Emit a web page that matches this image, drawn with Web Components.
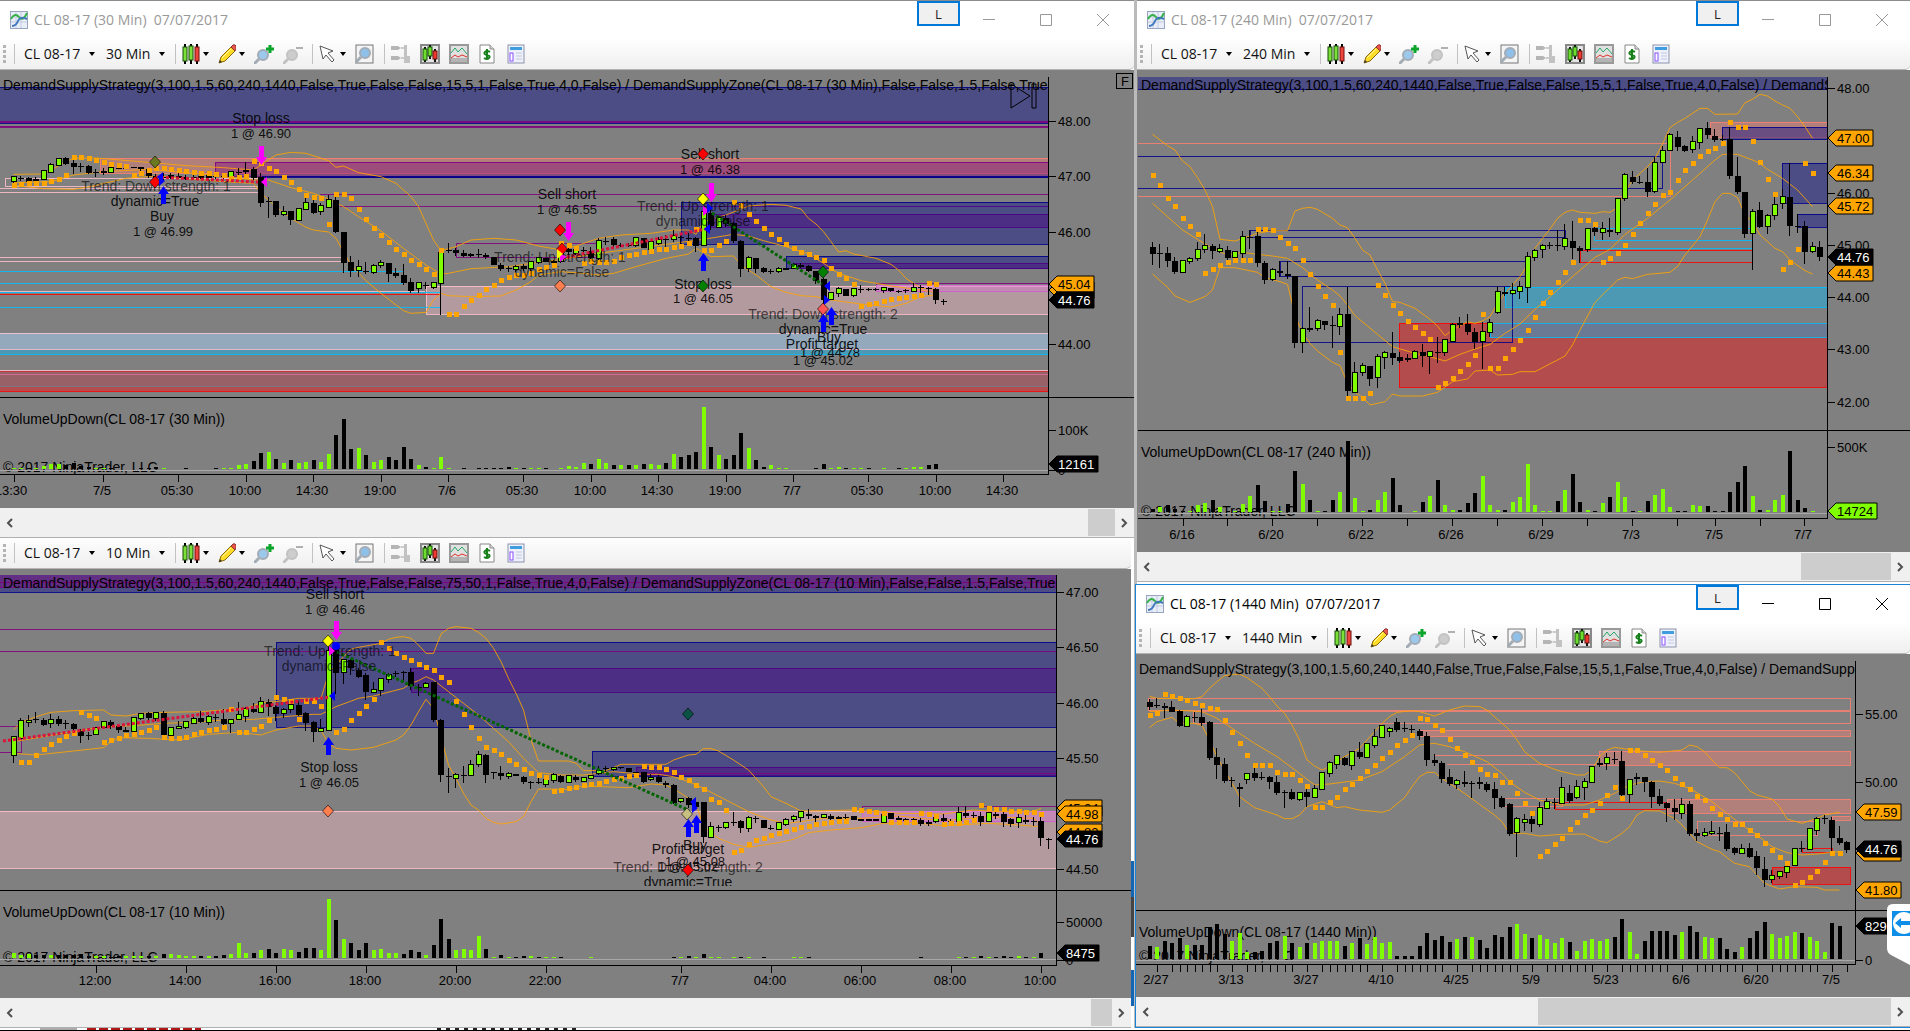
<!DOCTYPE html>
<html lang="en">
<head>
<meta charset="utf-8">
<title>CL 08-17 charts</title>
<style>
  body {
    margin: 0;
    background: #fff;
    font-family: "Open Sans", "Noto Sans", sans-serif;
  }
</style>
</head>
<body>
<trade-desk>
  <chart-window slot="left" class="plain" heading="CL 08-17 (30 Min)  07/07/2017">
    <tool-bar slot="tools" instrument="CL 08-17" interval="30 Min"></tool-bar>
    <price-chart feed="min30"></price-chart>
    <scroll-strip style="--thumb: 27px"></scroll-strip>
  </chart-window>
  <chart-window slot="left" class="bare">
    <tool-bar slot="tools" instrument="CL 08-17" interval="10 Min"></tool-bar>
    <price-chart feed="min10"></price-chart>
    <scroll-strip style="--thumb: 21px"></scroll-strip>
  </chart-window>
  <chart-window slot="right" class="plain" heading="CL 08-17 (240 Min)  07/07/2017">
    <tool-bar slot="tools" instrument="CL 08-17" interval="240 Min"></tool-bar>
    <price-chart feed="min240"></price-chart>
    <scroll-strip style="--thumb: 90px"></scroll-strip>
  </chart-window>
  <chart-window slot="right" class="active" heading="CL 08-17 (1440 Min)  07/07/2017">
    <tool-bar slot="tools" instrument="CL 08-17" interval="1440 Min"></tool-bar>
    <price-chart feed="min1440"></price-chart>
    <scroll-strip style="--thumb: 353px"></scroll-strip>
  </chart-window>
</trade-desk>

<script>
// All y values in the feeds are counted in thirds of a pixel from `base`.
// bars:  direction, body top, body bottom, high, low (wick may be left out)
// sar:   one value per bar, "." for none
// vol:   direction + height, "." for none
// bands: [bar, y] knots
// zones: x1, x2, y1, y2, colour, fill (1) or outline only (0)
const HEAD = 'DemandSupplyStrategy(3,100,1.5,60,240,1440,False,True,False,False,';

const feeds = {
  min30: {
    view: [0, 70, 1134, 438], plotTop: 77, right: 1048, base: 0, first: 13.5, split: 397, axis: 474, zero: 469,
    title: HEAD + '15,5,1,False,True,4,0,False) / DemandSupplyZone(CL 08-17 (30 Min),False,False,1.5,False,True',
    titleAt: [3, 85], volTitle: 'VolumeUpDown(CL 08-17 (30 Min))', volAt: [3, 419], copyAt: [3, 467],
    bars: `g532 543 528 548,b535 538 528 544,b534 545 530 552,b537 543 530 548,g514 537 510 540,g495 517 490 520,g477 495 473 498,b475 491 471 494,
      b489 500 480 521,b497 502 488 515,b499 518 495 521,b516 519 508 530,b514 518 505 524,g504 516 500 520,b503 506 496 508,b503 506 500 508,
      b502 505,b502 508 500 522,b508 529 503 533,b527 533 522 540,b530 534 520 540,b526 534 520 538,b528 535 520 538,b531 536 525 540,
      b531 535 525 540,b528 534 522 538,b526 533 520 540,b528 532 522 537,b528 531 520 538,g515 528 512 530,b516 518 503 530,b511 516 485 528,
      b506 533 500 540,b530 608 520 622,b603 607 590 655,b604 644 603 650,g636 643 617 648,b634 661 634 675,g626 660,g610 626 594 630,
      b608 638 590 642,g617 634 610 645,g600 620 585 625,b600 697 592 700,b697 788 697 818,b786 813 767 830,g802 811 780 830,b812 816 785 822,
      g797 816 793 822,g790 795 779 803,b790 822 788 845,b819 829 803 833,b826 850 793 856,b846 872 835 878,g849 864 845 880,b854 858 846 867,
      g849 860 845 867,g760 850 755 945,b751 754 728 758,b751 758 745 768,b760 767 750 772,b762 767 758 772,b762 766 748 775,b765 771 760 776,
      b771 796,b794 806 790 812,b804 807 798 815,g800 806 795 815,b797 806 793 812,g787 804 782 815,g775 787 770 792,b773 787,
      b783 788 780 795,g762 783 755 790,b748 757 735 765,g750 758 745 765,b750 753 740 765,b752 775 740 780,g722 775 715 782,b722 724 710 735,
      b717 735 712 745,b734 736 728 740,b735 738 728 742,g715 735 712 740,b713 745,g727 746 722 750,g720 730 712 735,b718 720 705 742,
      g708 718 690 725,b711 714 700 735,b713 716 700 735,b713 738 710 755,g635 736 620 738,b640 678 625 690,g655 682 650 685,b655 672 645 680,
      b670 722 665 728,b722 806 720 832,g774 803 768 815,b775 808 773 818,b805 815 800 820,b812 816 808 823,g807 814 800 820,b805 809,
      g795 803 790 806,b795 800 790 804,b798 812 796 816,b814 842 812 852,b838 900 835 922,g880 896 878 900,g868 878 862 890,b866 887,
      g868 886 863 890,b867 869 855 880,b868 870 865 873,b868 870 865 873,g865 871 863 878,b865 872 863 876,b873 876 870 880,b870 873 866 880,
      g865 873 850 876,b862 864 855 880,b865 868 860 885,b867 899 865 912,b902 906 898 915`,
    sar: `556 551 550 548 548 544 537 526 472 472 475 481 487 492 495 498 526 518 510 503 505 507 509 512 515 518 520 523 524 534 532 528
      484 490 503 514 532 547 566 584 592 594 672 581 581 593 626 656 683 705 727 747 762 781 793 806 822 750 942 942 919 900 884 867
      855 841 830 825 825 818 806 800 795 728 735 745 790 783 785 785 784 772 766 761 757 752 748 746 741 737 728 687 750 750 736 724
      605 616 641 664 683 702 716 731 744 755 763 770 780 803 822 835 852 918 912 909 902 898 895 891 887 884 848 852`,
    vol: `g3 g3 b3 g4 g8 g15 g15 b12 b18 b8 b6 g3 g3 b3 . . . b3 b3 b6 g3 . . b3 . . . b3 g3 g3 g11 g14
      b23 b49 g52 b29 g18 b26 g18 g22 b26 g22 g45 b101 b150 b60 g63 b41 g22 g26 b37 b26 b67 b29 g11 b7 g3 g37 g3 . b3 . b3 b3
      b3 b3 b7 g3 b3 g3 g3 b3 . g3 g10 g7 g18 b14 g29 g18 b11 g11 b11 g11 b14 g14 g11 b18 g44 b37 b41 b52 g187 b67 g41 b29
      b41 b108 g63 b26 b7 g11 g3 g3 . . . b3 b14 g3 g7 b3 g3 g3 b3 . g3 . b3 g3 g7 g7 b11 b14`,
    bands: [
      [[0,523],[4,522],[7,485],[8,475],[11,474],[18,487],[23,497],[28,503],[32,510],[34,480],[35,465],[37,457],[39,460],[42,482],[43,502],[44,498],[46,518],[49,530],[51,550],[53,590],[54,620],[55,670],[56,720],[57,752],[59,740],[61,720],[64,715],[67,720],[70,738],[73,750],[75,738],[78,715],[81,705],[85,700],[88,690],[90,690],[91,703],[92,665],[95,645],[98,618],[101,613],[103,616],[105,627],[106,655],[107,672],[108,695],[109,725],[110,756],[111,752],[112,762],[115,775],[117,793],[118,810],[119,835],[121,865],[123,868]],
      [[0,548],[5,545],[8,525],[12,515],[18,508],[25,522],[32,540],[34,540],[37,563],[40,580],[42,597],[44,620],[46,650],[49,693],[52,745],[55,795],[57,822],[58,820],[61,806],[66,800],[70,787],[73,778],[78,760],[83,745],[88,730],[92,718],[96,703],[98,708],[100,722],[103,740],[106,762],[108,790],[110,820],[113,842],[117,858],[121,870],[123,878]],
      [[0,556],[4,566],[8,568],[10,561],[15,535],[19,528],[28,545],[32,550],[33,580],[35,620],[37,655],[39,682],[40,690],[42,696],[43,715],[44,755],[45,795],[47,842],[49,880],[51,915],[52,932],[53,940],[55,937],[56,900],[57,880],[58,887],[61,890],[65,888],[67,870],[69,845],[70,825],[73,815],[76,820],[78,825],[80,820],[83,800],[87,775],[90,762],[91,745],[93,770],[96,768],[97,795],[99,825],[101,860],[103,877],[105,887],[107,890],[109,900],[113,912],[117,921],[119,910],[121,890],[123,885]]
    ],
    zones: [
      [-2,1050,262,370,'darkblue',1], [-2,1050,363,367,'purple',1], [-2,1050,378,381,'purple',1],
      [100,1050,475,520,'salmon',1], [215,1050,487,529,'purple',1], [320,1050,531,531,'darkblue',0], [262,1050,529,532,'darkblue',0],
      [5,262,535,558,'pink',0], [-2,260,565,577,'pink',0],
      [320,1050,583,583,'purple',0], [340,1050,618,618,'purple',0],
      [681,1050,606,733,'darkblue',1], [711,1050,643,682,'indigo',1],
      [786,1050,768,805,'darkblue',1], [793,1050,790,805,'indigo',1],
      [426,1050,857,943,'pink',1], [876,1050,850,873,'purple',0], [876,1050,856,873,'orchid',1],
      [456,597,730,771,'purple',0],
      [-2,342,771,783,'pink',0], [-2,403,813,813,'deepskyblue',0], [-2,403,850,850,'deepskyblue',0], [-2,425,873,873,'pink',0],
      [-2,441,877,877,'deepskyblue',0], [-2,441,881,881,'red',0], [-2,441,921,921,'deepskyblue',0],
      [-2,1050,1000,1061,'deepskyblue',1], [-2,1050,1000,1046,'pink',1],
      [-2,1050,1112,1173,'red',1], [-2,1050,1109,1157,'slategray',1], [-2,1050,1109,1109,'pink',0], [-2,1050,1123,1123,'palevioletred',0]
    ],
    ticks: [[13.5,'13:30',11],[103,'7/5'],[178,'05:30'],[246,'10:00'],[313,'14:30'],[381,'19:00'],[448,'7/6'],[523,'05:30'],[591,'10:00'],[658,'14:30'],[726,'19:00'],[793,'7/7'],[868,'05:30'],[936,'10:00'],[1003,'14:30']],
    labelY: 491,
    scale: [[121,'48.00'],[176,'47.00'],[232,'46.00'],[344,'44.00'],[430,'100K'],[470,'0']],
    tags: [[290,'','orange'],[284,'45.04','orange'],[300,'44.76','black'],[464,'12161','black']],
    dots: [[156,177,258,182,'crimson'],[562,258,706,229,'crimson'],[712,213,822,284,'darkgreen']],
    marks: [['down',261,146,'magenta'],['lt',264,182,'magenta'],['dia',155,162,'#6b7a20'],['dia',155,182,'red'],['lt',160,177,'blue'],['rt',162,181,'blue'],['up',163,186,'blue'],
      ['dia',560,230,'red'],['down',568,222,'magenta'],['dia',560,286,'coral'],['rt',563,257,'magenta'],['dia',562,249,'red'],['rt',560,254,'yellow'],
      ['dia',703,154,'red'],['down',711,183,'magenta'],['dia',703,199,'yellow'],['rt',706,211,'magenta'],['lt',707,229,'blue'],['rt',710,208,'blue'],['up',703,253,'blue'],['dia',703,286,'green'],
      ['dia',823,272,'green'],['lt',827,286,'blue'],['rt',827,300,'blue'],['dia',823,309,'#ff5555'],['up',823,314,'blue'],['up',831,307,'blue']],
    notes: [[261,118,'Stop loss'],[261,133,'1 @ 46.90'],[156,186,'Trend: Down strength: 1',1],[155,201,'dynamic=True'],[162,216,'Buy'],[163,231,'1 @ 46.99'],
      [567,194,'Sell short'],[567,209,'1 @ 46.55'],[560,257,'Trend: Up strength: 1',1],[562,272,'dynamic=False',1],
      [710,154,'Sell short'],[710,169,'1 @ 46.38'],[703,206,'Trend: Up strength: 1',1],[703,221,'dynamic=False',1],[703,284,'Stop loss'],[703,298,'1 @ 46.05'],
      [823,314,'Trend: Down strength: 2',1],[823,329,'dynamic=True'],[829,337,'Buy'],[822,344,'Profit target'],[830,352,'1 @ 44.78'],[823,360,'1 @ 45.02']],
    extra: `<path d="M1011 84V108L1030 96Z M1032 84h4v24h-4z" fill="none" stroke="#000"/>
      <rect x="1116.5" y="73.5" width="16" height="15" fill="none" stroke="#000"/><text x="1121" y="86">F</text>`
  },

  min10: {
    view: [0, 569, 1131, 429], plotTop: 575, right: 1056, base: 560, first: 13.5, split: 890, axis: 965, zero: 958,
    title: HEAD + '75,50,1,False,True,4,0,False) / DemandSupplyZone(CL 08-17 (10 Min),False,False,1.5,False,True',
    titleAt: [3, 583], volTitle: 'VolumeUpDown(CL 08-17 (10 Min))', volAt: [3, 912], copyAt: [3, 957],
    bars: `g532 585 528 608,g483 533 475 537,g482 486 465 500,b478 480 457 490,b480 495 475 497,g480 490 463 503,b478 492 468 497,b490 492 480 507,
      b493 508 490 512,b512 527 508 550,b524 527 515 540,g505 521 500 523,g486 501 482 503,b487 497 480 507,b498 511 497 518,b511 515 500 517,
      g475 513 471 517,g462 474 458 480,b460 475 455 482,g460 475 457 483,b460 525 452 537,g503 524 500 530,g500 503 482 507,g487 501 483 507,
      g476 489 468 493,b473 487 452 490,g472 486 465 495,b470 475 463 487,b476 492 448 497,g480 490 476 518,g465 477 425 481,g447 468 440 487,
      b446 455 430 459,g427 455 410 458,b427 440 418 467,b440 461 435 483,g450 460 445 475,g435 446 427 460,b435 465 422 468,b460 488 457 513,
      b487 515 483 545,g507 513 478 517,g273 510 255 512,b268 338 262 403,g300 337 297 372,b300 325 298 345,b330 350 325 355,b345 395 340 420,
      g390 397 365 400,g357 390 353 408,g345 356 338 370,b338 341 333 350,b335 338 333 367,b337 378 325 390,b380 385 372 408,g371 382 367 385,
      b367 480 365 487,b480 645 478 665,b648 652 625 698,g645 653 640 683,b645 648 617 668,g615 645 600 648,g585 613 573 620,b585 646 583 668,
      b637 640 637 657,b640 648 617 660,g641 648 635 657,b642 648,b650 665 647 672,b667 670 662 687,b667 670 650 672,g660 673 655 680,
      g645 661 638 668,b647 667 645 670,g648 667 645 670,b650 660 645 667,g653 662 650 667,g648 654 645 658,g632 640 618 645,b625 628 618 635,
      g623 627 620 633,b622 625 620 628,b625 637,b637 640,b637 665 635 670,g653 657 643 662,b650 665 645 668,b668 675 663 683,
      b675 728 672 733,g718 724 713 728,b713 735 710 745,b725 740 718 745,b727 832 725 850,g802 832 785 833,b801 805 795 815,g790 800 785 808,
      b785 788 755 797,b783 803 780 818,g775 803 768 815,b773 777 768 790,b780 803,b804 808 795 810,g790 806 787 810,g779 793 775 797,
      g770 778 765 785,g757 771 753 785,b763 768 748 778,b768 773 765 785,g766 770 763 773,b769 777 763 783,b772 777 767 783,b770 773 763 783,
      b768 780,b778 783,b778 782,b778 783,g765 787,b760 778,b775 780 768 788,b778 782 774 786,
      b777 780 774 784,b780 792 775 797,b787 792 780 797,g774 783 768 790,b775 783 763 795,b782 785 778 788,g760 783 740 787,b760 768 737 773,
      b765 768 755 778,b767 785 757 798,g760 783 757 785,b762 767 750 777,b762 785 745 800,b778 793 775 800,g775 787 755 805,b780 787 757 793,
      b783 787 770 797,b783 833 770 857,b836 840 835 867`,
    sar: `. 605 605 586 567 552 541 527 520 456 466 474 545 541 533 525 522 517 511 502 530 534 533 530 523 515 511 507 500 448 515 515
      506 497 481 410 417 422 478 422 422 437 . 515 508 481 459 437 418 245 265 279 290 301 312 320 331 351 366 422 463 500 534 560
      571 582 601 612 627 639 646 650 694 691 685 680 676 672 668 662 658 653 648 645 617 622 622 628 635 650 661 676 688 717 725 751
      875 869 853 841 834 826 819 812 806 801 797 792 788 785 783 782 748 751 754 756 760 787 787 785 785 758 763 767 793 790 788 786
      781 736 743 747 748 752 753 755 755 762`,
    vol: `g14 g10 g12 b10 b10 g8 b8 b10 b8 b12 b6 g6 g6 b4 b6 g6 g6 g5 b5 g6 b12 g12 g9 g5 g5 b5 g5 b5 b8 g12 g45 g15
      b16 g23 b27 b16 g27 g23 b19 b31 b31 g24 g178 b115 g57 b45 b23 b45 g23 g27 g16 g15 b12 b23 b19 g8 b38 b117 b57 g24 g27 g23 g65 b27
      g4 b8 g2 b2 b5 g5 b2 g2 g2 b2 . . . g2 . . . . . . . . . . b2 g2 b5 g3 b12 g3 g3 .
      g3 b2 g3 . b2 . . . g3 g3 b2 . . . . . . . . . . . . . . b2 . . . . g2 b2 g3 b5 g2 b2 b5 b2 g5 b2 g2 b16`,
    bands: [
      [[0,510],[1,487],[3,470],[5,457],[8,452],[12,450],[13,465],[15,468],[17,460],[20,457],[25,455],[28,450],[31,445],[33,428],[35,425],[38,415],[41,415],[42,340],[44,290],[45,268],[46,262],[49,250],[50,238],[51,232],[52,230],[53,235],[54,255],[55,280],[56,280],[57,222],[58,205],[59,200],[61,205],[62,217],[63,235],[64,265],[65,305],[66,355],[67,400],[68,450],[69,540],[70,603],[74,603],[75,610],[76,632],[79,632],[81,613],[87,613],[88,600],[90,585],[91,583],[92,566],[93,566],[94,573],[96,600],[98,630],[100,680],[101,710],[103,730],[105,753],[108,752],[112,750],[118,760],[124,762],[128,750],[131,755],[136,755],[137,745]],
      [[0,545],[4,530],[8,515],[12,500],[16,497],[20,490],[24,487],[28,480],[32,478],[36,470],[40,463],[41,463],[43,440],[46,415],[48,408],[52,385],[53,370],[54,362],[55,350],[56,360],[58,395],[60,430],[62,465],[64,505],[66,545],[68,595],[70,638],[73,645],[76,645],[80,635],[84,643],[86,643],[88,650],[90,665],[92,685],[95,720],[98,755],[101,780],[103,790],[105,785],[108,775],[113,775],[118,768],[124,782],[130,770],[136,775],[137,795]],
      [[0,580],[3,585],[8,573],[12,563],[13,545],[14,533],[18,535],[22,540],[26,523],[30,517],[33,525],[35,510],[38,498],[40,498],[41,512],[42,550],[43,565],[45,570],[48,562],[51,540],[52,525],[53,495],[54,455],[55,418],[56,445],[57,530],[58,615],[59,655],[60,700],[61,735],[62,750],[63,775],[64,787],[65,792],[67,785],[68,770],[69,725],[70,687],[74,688],[76,678],[82,683],[85,672],[87,675],[89,700],[91,730],[92,800],[94,835],[96,853],[98,862],[100,855],[102,848],[104,838],[106,818],[109,810],[113,803],[116,790],[120,788],[124,797],[130,790],[134,795],[137,800]]
    ],
    zones: [
      [-2,1060,30,97,'darkblue',1], [-2,1060,30,81,'purple',1], [-2,1060,65,65,'purple',0],
      [-2,1060,206,206,'purple',0], [276,1060,247,502,'darkblue',1], [-2,1060,273,273,'purple',0], [411,1060,325,397,'indigo',1],
      [592,1060,573,649,'darkblue',1], [636,1060,620,645,'indigo',1], [636,1060,640,640,'purple',0],
      [-2,21,498,577,'purple',0], [-2,1060,753,923,'pink',1], [862,1060,738,783,'purple',0], [862,1060,753,783,'orchid',1]
    ],
    ticks: [[96,'12:00'],[186,'14:00'],[276,'16:00'],[366,'18:00'],[456,'20:00'],[546,'22:00'],[681,'7/7'],[771,'04:00'],[861,'06:00'],[951,'08:00'],[1041,'10:00']],
    labelY: 981,
    scale: [[592,'47.00'],[647,'46.50'],[703,'46.00'],[758,'45.50'],[869,'44.50'],[922,'50000'],[960,'0']],
    tags: [[808,'45.04','orange'],[832,'44.83','orange'],[814,'44.98','orange'],[839,'44.76','black'],[953,'8475','black']],
    dots: [[3,741,330,697,'crimson'],[337,652,688,810,'darkgreen']],
    marks: [['down',336,621,'magenta'],['dia',328,641,'yellow'],['dot',336,646,'blue'],['rt',332,651,'magenta'],['lt',332,696,'blue'],['up',328,737,'blue'],['dia',328,811,'coral'],
      ['dia',688,714,'#0b5345'],['dia',687,814,'#c8c080'],['lt',693,802,'blue'],['rt',695,808,'blue'],['up',688,819,'blue'],['up',696,815,'blue'],['dia',688,870,'red']],
    notes: [[335,594,'Sell short'],[335,609,'1 @ 46.46'],[330,651,'Trend: Up strength: 1',1],[329,666,'dynamic=False',1],[329,767,'Stop loss'],[329,782,'1 @ 46.05'],
      [695,845,'Buy'],[688,849,'Profit target'],[695,861,'1 @ 45.08'],[688,866,'1 @ 45.02'],[688,867,'Trend: Down strength: 2',1],[688,882,'dynamic=True']]
  },

  min240: {
    view: [1137, 70, 773, 482], plotTop: 77, left: 1138, right: 1827, base: 0, first: 1152.5, split: 430, axis: 518, zero: 512,
    title: HEAD + '15,5,1,False,True,4,0,False) / DemandS',
    titleAt: [1141, 85], volTitle: 'VolumeUpDown(CL 08-17 (240 Min))', volAt: [1141, 452], copyAt: [1141, 511],
    bars: `b740 762 725 795,b759 761 733 803,b760 783 740 800,b782 817 770 822,g783 816 780 818,g777 782 770 792,g750 775 725 783,g738 748 703 760,
      b738 752 733 777,g747 753 733 760,b750 773 737 783,g757 770 753 773,g712 760 692 783,b710 712 690 747,b708 788 690 802,b790 840 783 852,
      g809 838 803 842,b812 820 783 830,b822 827 783 838,b828 1028 828 1043,g986 1025 980 1058,b985 989 920 997,g963 985 958 992,b963 976 962 990,
      b974 977 948 1043,g945 977 925 1005,b943 1173 860 1197,g1120 1177 1087 1180,g1098 1116 1090 1127,b1098 1136 1097 1158,g1072 1132 1063 1163,g1060 1072 1052 1107,
      b1060 1073 995 1095,b1070 1083 1057 1090,b1075 1079 1063 1085,g1057 1075 1050 1077,b1057 1069 1032 1100,g1057 1068 1052 1122,b1055 1058 1010 1088,g1020 1056 1018 1068,
      g975 1023 970 1027,b970 975 950 983,b973 997 943 1005,b997 1025 985 1047,g997 1023 967 1107,g970 997 957 1012,g877 937 858 943,b877 881 860 888,
      g873 880 850 885,g862 873 843 897,g772 861 757 908,g752 770 748 783,g738 748 733 773,b735 738 725 748,b735 738 690 753,g718 738 672 750,
      b722 745 662 777,b745 752 737 788,g688 748 683 755,b685 697 680 707,g688 696 665 720,b690 697 653 712,g598 697 593 705,g524 595 518 602,
      b530 547 513 552,b545 548 527 552,b547 577 503 590,g490 574 470 578,g453 486 437 490,g406 450 400 453,b410 440 393 453,b437 452 435 455,
      g427 448 407 458,g388 427 383 447,b383 405 365 417,b407 420 388 427,b417 420 405 430,b418 527 380 537,b528 577 470 583,b577 702 575 713,
      g637 700 627 810,b630 680 607 683,g648 677 643 702,g615 645 583 660,g592 608 567 627,b592 678 490 707,b677 682 643 698,b678 757 663 792,
      g742 752 725 758,b742 772 722 783`,
    sar: `525 555 593 619 653 679 702 818 807 796 785 781 781 781 687 688 691 710 729 743 781 822 859 889 916 1055 1193 1193 1193 1178 856 886
      916 938 962 980 999 1017 1160 1149 1134 1114 1092 1066 943 1103 1103 1073 1048 1021 991 950 908 875 845 815 785 661 661 673 785 773 758 736
      702 668 638 612 586 575 541 511 488 469 454 443 430 365 380 380 424 485 537 582 807 785 747 488 518`,
    vol: `b10 g15 b20 b8 b3 g3 g20 g28 b37 g15 b2 g3 g25 g47 b82 b33 g3 g2 b25 b123 g85 b37 g3 b3 b37 g60 b213 g41 g3 b7 g37 g60
      b101 b22 . g2 b30 g49 b97 g22 g7 b7 b26 b56 g108 g22 g7 b7 g30 g45 g145 g22 g3 g3 b34 g67 b115 b30 g7 b3 g26 b45 g90 g45
      b3 g3 b34 g52 g70 g14 b3 b3 g22 g19 b19 b3 b3 b60 b90 b138 g48 b7 g7 g37 g52 b183 b37 b11 g3`,
    bands: [
      [[0,403],[2,437],[3,450],[4,483],[5,500],[6,533],[7,570],[8,620],[9,718],[11,723],[13,708],[14,700],[16,692],[18,692],[19,633],[20,625],[21,622],[22,628],[24,655],[25,675],[26,683],[27,715],[28,750],[29,765],[30,810],[31,850],[32,905],[33,907],[35,925],[37,958],[38,978],[39,1007],[40,990],[42,965],[43,970],[44,963],[45,950],[46,910],[47,880],[49,830],[50,795],[51,745],[52,715],[53,687],[54,655],[55,637],[56,630],[57,637],[59,640],[60,635],[61,637],[62,622],[63,577],[64,540],[66,500],[67,475],[68,432],[69,383],[70,367],[71,355],[72,340],[73,325],[74,325],[75,343],[78,342],[79,308],[80,298],[81,283],[82,288],[83,303],[84,315],[85,325],[86,350],[87,380],[88,415]],
      [[0,610],[2,650],[4,690],[6,718],[8,745],[10,765],[12,757],[14,763],[16,768],[18,775],[20,803],[22,840],[24,870],[25,888],[26,915],[27,947],[30,1003],[32,1040],[35,1060],[37,1070],[39,1083],[41,1063],[43,1047],[45,1033],[47,1000],[49,972],[51,928],[53,890],[56,830],[59,772],[61,748],[63,703],[66,655],[69,600],[72,540],[75,480],[76,463],[78,463],[80,480],[81,490],[82,508],[84,535],[86,570],[88,620]],
      [[0,822],[2,862],[3,888],[5,907],[7,890],[8,870],[9,803],[11,803],[14,817],[15,833],[17,845],[18,853],[19,945],[20,1000],[21,1030],[22,1053],[24,1087],[25,1097],[26,1150],[27,1177],[28,1192],[29,1215],[31,1205],[32,1182],[33,1188],[36,1188],[38,1177],[40,1145],[42,1137],[43,1113],[45,1110],[46,1125],[48,1123],[49,1115],[51,1115],[55,1068],[56,1035],[57,990],[59,907],[62,840],[63,832],[64,836],[66,823],[69,817],[70,800],[71,765],[73,710],[74,660],[75,605],[76,580],[77,580],[78,593],[79,645],[80,665],[81,705],[83,745],[84,755],[85,780],[87,812],[88,822]]
    ],
    zones: [
      [1130,1835,215,268,'darkblue',1], [1130,1670,430,588,'salmon',0], [1130,1662,468,565,'darkblue',0],
      [1250,1565,689,711,'darkblue',0], [1280,1527,783,828,'darkblue',0],
      [1399,1835,970,1162,'red',1], [1490,1835,970,1012,'deepskyblue',1], [1505,1835,860,922,'deepskyblue',1],
      [1302,1512,858,1027,'darkblue',0],
      [1594,1752,685,719,'deepskyblue',0], [1580,1752,749,787,'red',0], [1587,1752,745,745,'deepskyblue',0],
      [1710,1835,367,412,'salmon',1], [1722,1835,381,418,'darkblue',1], [1782,1835,490,610,'darkblue',1], [1797,1835,643,682,'darkblue',1]
    ],
    ticks: [[1183,'6/16'],[1227],[1272,'6/20'],[1317],[1362,'6/22'],[1407],[1452,'6/26'],[1497],[1542,'6/29'],[1587],[1632,'7/3'],[1677],[1715,'7/5'],[1760],[1804,'7/7']],
    labelY: 535,
    scale: [[88,'48.00'],[193,'46.00'],[245,'45.00'],[297,'44.00'],[349,'43.00'],[402,'42.00'],[447,'500K']],
    tags: [[138,'47.00','orange'],[173,'46.34','orange'],[206,'45.72','orange'],[273,'44.43','orange'],[257,'44.76','black'],[511,'14724','chartreuse']],
    dots: [], marks: [], notes: []
  },

  min1440: {
    view: [1136, 654, 774, 343], plotTop: 661, left: 1136, right: 1855, base: 580, first: 1149.5, split: 910, axis: 964, zero: 959,
    title: HEAD + '15,5,1,False,True,4,0,False) / DemandSupp',
    titleAt: [1139, 669], volTitle: 'VolumeUpDown(CL 08-17 (1440 Min))', volAt: [1139, 932], copyAt: [1139, 956],
    bars: `b365 380 357 390,b376 379 353 383,b377 383 370 413,b381 395 363 397,b392 438 390 440,g412 438 405 440,b411 414 397 427,b410 430 388 437,
      b426 533 422 540,b532 555 505 597,b553 603 533 608,b600 604 590 622,b622 626 610 680,g583 597 578 612,b580 593 557 603,b590 593 577 600,
      b592 607 587 627,b605 638 587 645,b636 639 630 684,b636 657 627 660,g638 656 635 663,b635 650 628 682,g626 650 615 655,g580 627 575 630,
      g550 580 543 592,g528 551 525 567,b533 555 530 558,g517 555 512 570,b517 532 487 538,g493 532 490 535,g472 495 447 505,g438 472 435 475,
      g447 453 440 472,b427 450 415 455,b443 446 427 455,b447 450 435 462,b452 468 447 480,b467 540 455 558,b540 550 523 558,b550 597 543 610,
      b590 612 568 618,g603 612 597 627,b605 612 572 622,b609 612 603 653,b605 612 590 627,b612 630 607 637,b628 655 605 687,b653 680 647 685,
      b673 762 668 768,g718 757 712 830,g720 726 703 753,b718 733 708 757,g685 732 667 740,g667 683 653 687,b665 668 655 687,g625 668 592 672,
      b640 663 615 668,g622 652 600 658,g607 622 595 660,g560 607 557 610,b550 554 535 562,g533 550 520 570,b536 540 517 552,b543 645 512 655,
      g600 643 597 668,b592 598 580 615,b592 607 590 635,b607 650 603 685,b648 672 627 678,b670 685 667 725,b685 697 657 720,g675 698 655 717,
      b673 762 663 768,b760 767 747 783,g760 765 745 770,g755 760 723 765,b760 763 740 782,b757 806 733 813,b805 820 800 825,g807 820 793 823,
      b805 830 790 833,b828 865 813 885,b867 900 832 920,g888 898 870 910,g875 887 872 898,g862 875 855 895,g807 855 805 857,b803 806 783 815,
      g748 807 743 808,g718 750 712 765,b714 717 705 733,b720 775 712 820,b775 788 738 795,b787 810 783 818`,
    sar: `406 398 342 347 353 361 370 376 383 387 421 455 489 526 556 556 556 575 582 582 601 617 680 680 665 650 628 613 594 572 556 534
      515 496 481 466 413 416 436 451 477 504 526 545 568 582 586 605 605 638 669 699 827 812 793 773 747 725 706 691 668 646 620 654
      511 511 525 541 556 571 593 612 628 649 661 684 702 717 732 732 751 766 789 811 830 848 916 905 890 872 845 818 818`,
    vol: `b40 g35 b55 b48 b62 g43 b43 b43 b97 b105 b75 g55 g78 g20 b20 b25 b48 b55 g70 b47 g36 b47 g48 g55 g55 g55 b40 g47 b62 g44 g65 g48
      g51 b10 b10 b10 b40 b77 b58 b70 b51 g59 b66 g66 b58 b32 b73 b66 b97 g104 g74 b62 g73 g59 g48 g62 b51 g25 g55 g59 g55 g59 b66 b121
      g81 g14 b55 b85 b85 b85 b73 g81 b100 b81 g66 g62 b62 b29 b21 g36 b62 b85 b111 g74 g62 g70 g81 b77 g66 g55 g21 b107 b100`,
    bands: [
      [[0,349],[1,355],[6,356],[7,350],[8,325],[9,305],[10,287],[12,282],[13,293],[15,325],[16,350],[17,378],[18,400],[19,435],[20,480],[21,540],[22,558],[23,570],[24,560],[26,530],[28,505],[29,480],[31,430],[32,410],[33,397],[35,392],[36,395],[38,408],[40,390],[42,378],[44,380],[45,390],[47,430],[48,450],[49,480],[50,515],[52,550],[54,568],[55,575],[57,585],[58,585],[59,570],[60,530],[61,510],[62,502],[65,512],[68,517],[71,510],[72,495],[73,500],[74,515],[75,540],[76,563],[77,563],[78,578],[79,605],[80,632],[81,645],[83,657],[84,680],[85,717],[87,730],[89,715],[90,705],[92,697]],
      [[0,395],[3,390],[7,395],[9,415],[11,445],[14,490],[17,530],[20,580],[22,615],[24,612],[28,600],[31,575],[34,530],[36,495],[38,490],[40,500],[42,515],[45,545],[47,580],[48,605],[50,637],[52,660],[55,675],[58,675],[60,660],[62,640],[64,615],[66,605],[68,603],[70,610],[72,625],[75,665],[77,700],[79,735],[81,765],[83,800],[85,818],[87,825],[89,822],[92,815]],
      [[0,443],[1,425],[3,412],[4,430],[6,430],[7,437],[8,480],[9,530],[11,610],[12,650],[14,683],[17,705],[18,716],[19,716],[20,705],[21,680],[23,665],[25,683],[26,680],[28,690],[31,697],[32,690],[34,653],[35,620],[36,590],[37,577],[38,577],[39,595],[42,640],[44,673],[46,705],[47,725],[48,760],[50,760],[52,768],[55,763],[58,762],[60,783],[61,788],[63,760],[64,740],[65,705],[66,692],[68,693],[70,715],[71,735],[73,785],[75,808],[76,815],[78,850],[80,860],[82,910],[84,927],[86,920],[89,922],[90,930],[92,930]]
    ],
    zones: [
      [1148,1850,355,391,'salmon',0], [1193,1850,392,428,'salmon',0], [1420,1850,450,469,'salmon',1], [1435,1600,524,524,'salmon',0], [1447,1600,551,551,'salmon',0],
      [1599,1850,513,555,'salmon',1], [1503,1562,653,679,'salmon',0], [1555,1667,667,686,'red',0], [1667,1850,656,698,'salmon',1],
      [1697,1817,723,766,'salmon',0], [1832,1850,708,720,'salmon',1], [1802,1832,805,815,'red',0], [1772,1850,862,912,'red',1]
    ],
    ticks: [], tickLabels: ['2/27','3/13','3/27','4/10','4/25','5/9','5/23','6/6','6/20','7/5'],
    labelY: 980,
    scale: [[714,'55.00'],[782,'50.00'],[960,'0']],
    tags: [[812,'47.59','orange'],[853,'','orange'],[849,'44.76','black'],[890,'41.80','orange'],[926,'829','black']],
    dots: [], marks: [], notes: []
  }
};

// The daily chart has a tick for each session but the ones next to a label.
for (let i = 1; i < 94; i++) {
  const n = i % 10;
  if (n === 0 || n === 2) continue;
  const tick = [feeds.min1440.first + i * 7.5];
  if (n === 1) tick.push(feeds.min1440.tickLabels[(i - 1) / 10]);
  feeds.min1440.ticks.push(tick);
}

const STEP = 7.5;

class PriceChart extends HTMLElement {
  constructor() {
    super();
    this.attachShadow({ mode: 'open' });
  }

  connectedCallback() {
    const f = feeds[this.getAttribute('feed')];
    this.f = f;
    this.left = f.left || 0;
    this.shadowRoot.innerHTML = `
      <style>
        :host { display: block; background: #808080; }
        svg { display: block; width: 100%; height: auto; font: 13px "Liberation Sans", Arial, sans-serif; }
        .crisp { shape-rendering: crispEdges; }
        .mid { text-anchor: middle; }
        .name { font-size: 14px; }
      </style>
      <svg viewBox="${f.view.join(' ')}" role="img" aria-label="${f.volTitle}">
        <clipPath id="plot"><rect x="${this.left}" y="${f.plotTop}" width="${f.right - this.left}" height="${f.split - f.plotTop - 4}"/></clipPath>
        <g clip-path="url(#plot)">
          <g class="crisp">${this.zones()}</g>
          ${this.bands()}
          <g class="crisp">${this.candles()}</g>
          <g class="crisp">${this.sar()}</g>
          ${this.dots()}
          ${f.notes.map(n => this.note(...n)).join('')}
          ${f.marks.map(m => this.mark(...m)).join('')}
          <text class="name" x="${f.titleAt[0]}" y="${f.titleAt[1] + 5}">${f.title}</text>
        </g>
        <text class="name" x="${f.volAt[0]}" y="${f.volAt[1] + 5}">${f.volTitle}</text>
        <text class="name" x="${f.copyAt[0]}" y="${f.copyAt[1] + 5}">© 2017 NinjaTrader, LLC</text>
        <g class="crisp">${this.volume()}</g>
        ${this.axes()}
        ${f.tags.map(t => this.tag(...t)).join('')}
        ${f.extra || ''}
      </svg>`;
  }

  x(i) { return this.f.first + i * STEP; }
  y(v) { return Math.round(this.f.base + v / 3); }

  zones() {
    return this.f.zones.map(([x1, x2, y1, y2, color, fill]) => {
      const top = this.y(y1), h = this.y(y2) - top;
      if (!h) return `<rect x="${x1}" y="${top}" width="${x2 - x1}" height="1" fill="${color}" fill-opacity=".85"/>`;
      return `<rect x="${x1}" y="${top}" width="${x2 - x1}" height="${h}"
        fill="${fill ? color : 'none'}" fill-opacity=".4" stroke="${color}" stroke-opacity=".85"/>`;
    }).join('');
  }

  bands() {
    return this.f.bands.map(band => {
      const pts = band.map(([i, v]) => `${this.x(i)},${this.f.base + v / 3}`).join(' ');
      return `<polyline points="${pts}" fill="none" stroke="orange" stroke-opacity=".85"/>`;
    }).join('');
  }

  sar() {
    return this.f.sar.split(/\s+/).map((v, i) => v === '.' ? '' :
      `<rect x="${Math.round(this.x(i)) - 2}" y="${this.y(+v) - 2}" width="5" height="5" fill="orange"/>`).join('');
  }

  candles() {
    return this.f.bars.split(',').map((bar, i) => {
      bar = bar.trim();
      const [a, b, hi = a, lo = b] = bar.slice(1).split(' ').map(Number);
      const x = Math.round(this.x(i));
      const top = this.y(a), h = Math.max(this.y(b) - top, 1), wick = this.y(hi);
      let out = `<rect x="${x - 1}" y="${wick}" width="1" height="${this.y(lo) - wick}"/>`;
      if (bar[0] === 'g') {
        out += `<rect x="${x - 3}" y="${top - 1}" width="6" height="${h + 2}"/>
          <rect x="${x - 2}" y="${top}" width="4" height="${h}" fill="chartreuse"/>`;
      } else {
        out += `<rect x="${x - 3}" y="${top}" width="6" height="${h}"/>`;
      }
      return out;
    }).join('');
  }

  volume() {
    return this.f.vol.split(/\s+/).map((v, i) => {
      if (v === '.') return '';
      const h = Math.max(Math.round(v.slice(1) / 3), 1);
      return `<rect x="${Math.round(this.x(i)) - 2}" y="${this.f.zero - h}" width="4" height="${h}" fill="${v[0] === 'g' ? 'chartreuse' : 'black'}"/>`;
    }).join('');
  }

  dots() {
    return this.f.dots.map(([x1, y1, x2, y2, c]) =>
      `<line x1="${x1}" y1="${y1}" x2="${x2}" y2="${y2}" stroke="${c}" stroke-width="3" stroke-dasharray="3 2"/>`).join('');
  }

  note(x, y, s, faint) {
    return `<text class="mid ${s.includes('@') ? '' : 'name'}" x="${x}" y="${y + 5}" fill-opacity="${faint ? 0.65 : 0.9}">${s}</text>`;
  }

  mark(kind, x, y, color) {
    const d = {
      down: `M${x - 2} ${y}h5v11h3l-5.5 8l-5.5-8h3z`,
      up: `M${x - 2} ${y + 18}h5v-10h3l-5.5-8l-5.5 8h3z`,
      lt: `M${x + 3} ${y - 5}v10l-6-5z`,
      rt: `M${x - 3} ${y - 5}v10l6-5z`,
      dia: `M${x} ${y - 6}l5.5 6l-5.5 6l-5.5-6z`,
      dot: `M${x - 4} ${y}a4 4 0 1 0 8 0a4 4 0 1 0-8 0z`
    }[kind];
    const edge = kind === 'dia' ? 'stroke="#000" stroke-opacity=".6"' : '';
    return `<path d="${d}" fill="${color}" ${edge}/>`;
  }

  axes() {
    const f = this.f, end = f.view[0] + f.view[2];
    let out = `<g class="crisp">
      <rect x="${this.left}" y="${f.zero + 1}" width="${f.right - this.left}" height="1" fill="#a8a8a8"/>
      <rect x="${this.left}" y="${f.split}" width="${end - this.left}" height="1"/>
      <rect x="${this.left}" y="${f.axis}" width="${f.right - this.left + 1}" height="1"/>
      <rect x="${f.right}" y="${f.plotTop}" width="1" height="${f.axis - f.plotTop}"/>`;
    for (const [x] of f.ticks) out += `<rect x="${Math.round(x)}" y="${f.axis}" width="1" height="8"/>`;
    for (const [y] of f.scale) out += `<rect x="${f.right}" y="${y}" width="8" height="1"/>`;
    out += '</g>';
    for (const [x, s, at] of f.ticks) if (s) out += `<text class="mid" x="${at || Math.round(x) - 1}" y="${f.labelY + 4}">${s}</text>`;
    for (const [y, s] of f.scale) out += `<text x="${f.right + 10}" y="${y + 5}">${s}</text>`;
    return out;
  }

  tag(y, label, color) {
    const x = this.f.right + 1;
    const w = label.length === 4 ? 42 : /^\d{5}$/.test(label) ? 49 : 45;
    return `<path d="M${x} ${y}l8-8h${w - 8}v16h${8 - w}z" fill="${color}" stroke="#000"/>
      <text x="${x + 9}" y="${y + 5}" fill="${color === 'black' ? '#fff' : '#000'}">${label}</text>`;
  }
}

customElements.define('price-chart', PriceChart);

const lens = (x, y, glass, rim) => `
  <path d="M${x - 4} ${y + 4}l-6 6" stroke="${rim}" stroke-width="3"/>
  <circle cx="${x}" cy="${y}" r="5" fill="${glass}" stroke="${rim}" stroke-width="2"/>`;

const icons = {
  candles: `<path d="M3 0v20M9 0v20M15 0v20" stroke="#000" stroke-width="2"/>
    <rect x="1" y="3" width="4" height="14" fill="#7be03a" stroke="#174a05"/>
    <rect x="7" y="2" width="4" height="14" fill="#7be03a" stroke="#174a05"/>
    <rect x="13" y="3" width="4" height="14" fill="#f0453c" stroke="#6a0f0a"/>`,
  pencil: `<path d="M1 19l2-6L13 3l4 4L7 17z" fill="#ffdc28" stroke="#8a6a10"/><path d="M4 14l9-9" stroke="#fff2a0"/>
    <path d="M13 3l2-2q2-1 3 1t-1 5z" fill="#e5564f" stroke="#93322c"/><path d="M1 19l1-3 2 2z" fill="#333"/>`,
  zoomIn: lens(9, 11, '#9cc8ec', '#a3abb5') + '<path d="M16 1v8M12 5h8" stroke="#0ca52c" stroke-width="3"/>',
  zoomOut: lens(9, 11, '#cdcdcd', '#c2c2c2') + '<path d="M13 4h7" stroke="#b0b0b0" stroke-width="2"/>',
  cursor: '<path d="M1 2l3 13 3-4 6 7 2-2-6-7 5-2z" fill="#fff" stroke="#555"/>',
  page: `<rect x="1" y="1" width="17" height="18" fill="#f4f4f4" stroke="#777"/>` + lens(10, 9, '#8fc0ea', '#a3abb5'),
  levels: `<path d="M0 2h7l3 2-3 2H0zM0 12h7l3 2-3 2H0z" fill="#b5b5b5"/><path d="M10 4h4M10 14h4" stroke="#ccc" stroke-width="2"/>
    <path d="M13 1h3v18h-3zM16 12h3v7h-3z" fill="#c2c2c2"/>`,
  framed: `<rect x="1" y="1" width="18" height="18" fill="#e4e4e4" stroke="#888" stroke-width="2"/>
    <path d="M5 3v15M10 1v14M15 5v13" stroke="#111" stroke-width="2"/><rect x="3" y="5" width="4" height="11" fill="#6fdc30" stroke="#145008"/>
    <rect x="8" y="3" width="4" height="9" fill="#6fdc30" stroke="#145008"/><rect x="13" y="7" width="4" height="8" fill="#ef3b32" stroke="#6a0f0a"/>`,
  lines: `<rect x="1" y="1" width="18" height="18" fill="#e0e0e0" stroke="#999" stroke-width="2"/><rect x="2" y="14" width="16" height="4" fill="#b4b4b4"/>
    <path d="M2 9l4-5 3 4 4-4 5 6" fill="none" stroke="#27a86a"/><path d="M2 14l4-3 3 2 4-2 5 2" fill="none" stroke="#e0322a"/>`,
  dollar: `<path d="M2 1h10l4 4v14H2z" fill="#fff" stroke="#888"/><path d="M12 1v4h4" fill="#ddd" stroke="#888"/>
    <path d="M12 8q-3-2-5 0t2 3 2 3-5 0M9 5v11" fill="none" stroke="#17801a" stroke-width="2"/>`,
  props: `<rect x="1" y="1" width="16" height="18" fill="#eef1fb" stroke="#8b93ad"/><rect x="3" y="3" width="12" height="3" fill="#3f9ee0"/>
    <rect x="3" y="9" width="3" height="8" fill="#fff" stroke="#8a4fff"/><path d="M9 9h6M9 12h6M9 15h6" stroke="#c3c8dd"/>`
};

const toolBarTemplate = document.createElement('template');
toolBarTemplate.innerHTML = `
  <style>
    :host {
      display: flex;
      align-items: center;
      box-sizing: border-box;
      height: 31px;
      padding: 0 0 1px 3px;
      background: linear-gradient(#fefefe, #efefef);
      border-bottom: 1px solid #b4b4b4;
      border-radius: 0 0 5px 0;
      overflow: hidden;
    }
    .grip { width: 3px; height: 18px; margin-right: 8px; background: repeating-linear-gradient(#b4b4b4 0 3px, transparent 3px 5px); }
    .sep { flex: none; width: 1px; height: 20px; background: #c2c2c2; }
    label, .menu { display: flex; align-items: center; }
    label { margin-left: 9px; gap: 8px; }
    label + label { margin-left: 11px; }
    label + .sep { margin-left: 10px; }
    label::after, .menu::after {
      content: '';
      border: 3px solid transparent;
      border-top: 4px solid #000;
      border-bottom: 0;
    }
    select {
      appearance: none;
      border: 0;
      padding: 0;
      background: none;
      color: #111;
      font: 14px "Open Sans", "Noto Sans", sans-serif;
    }
    button { flex: none; border: 0; padding: 0; background: none; height: 20px; }
    svg { display: block; }
    .menu { gap: 3px; }
    .group { display: flex; gap: 9px; margin: 0 9px 0 6px; }
  </style>
  <span class="grip"></span>
  <span class="sep"></span>
  <label><select class="instrument" aria-label="Instrument"></select></label>
  <label><select class="interval" aria-label="Interval"></select></label>
  <span class="sep"></span>
  <span class="group picks"></span>
  <span class="sep"></span>
  <span class="group views"></span>
  <span class="sep"></span>
  <span class="group panels"></span>
`;

class ToolBar extends HTMLElement {
  constructor() {
    super();
    this.attachShadow({ mode: 'open' });
    this.shadowRoot.appendChild(toolBarTemplate.content.cloneNode(true));
  }

  connectedCallback() {
    this.fill('instrument');
    this.fill('interval');
    this.group('.picks', [['candles', 18, 'Chart style', 1], ['pencil', 18, 'Drawing tools', 1], ['zoomIn', 20, 'Zoom in'], ['zoomOut', 20, 'Zoom out']]);
    this.group('.views', [['cursor', 18, 'Cursor', 1], ['page', 20, 'Data box']]);
    this.group('.panels', [['levels', 20, 'Chart trader'], ['framed', 20, 'Data series'], ['lines', 20, 'Indicators'], ['dollar', 20, 'Strategies'], ['props', 20, 'Properties']]);
  }

  fill(name) {
    this.shadowRoot.querySelector('.' + name).innerHTML = `<option>${this.getAttribute(name)}</option>`;
  }

  group(selector, items) {
    this.shadowRoot.querySelector(selector).innerHTML = items.map(([icon, w, label, menu]) =>
      `<button type="button" class="${menu ? 'menu' : ''}" aria-label="${label}"><svg width="${w}" height="20">${icons[icon]}</svg></button>`).join('');
  }
}

customElements.define('tool-bar', ToolBar);

const chartWindowTemplate = document.createElement('template');
chartWindowTemplate.innerHTML = `
  <style>
    :host { display: block; background: #fff; --ink: #999; }
    :host(.plain) { border-top: 1px solid #8c8c8c; }
    :host(.bare) { margin-right: 3px; }
    :host(.bare) header { display: none; }
    :host([slot="left"]) header { padding-right: 3px; }
    :host(.active) {
      --ink: #000;
      margin: 2px 0 0 -2px;
      border: solid #1883d7;
      border-width: 1px 0 1px 1px;
    }
    header { display: flex; align-items: center; height: 38px; color: var(--ink); }
    header > svg { margin: 0 6px 0 10px; }
    h1 { flex: 1; margin: 0; padding-bottom: 2px; font-size: 14px; font-weight: normal; white-space: pre; }
    button { border: 0; padding: 0; background: none; color: inherit; }
    .link {
      align-self: flex-start;
      width: 43px;
      height: 25px;
      border: 2px solid #0078d7;
      background: #f0f0f0;
      color: #222;
      font: 13px "Open Sans", sans-serif;
    }
    .ctl { width: 57px; height: 38px; }
    .ctl svg { display: block; margin: auto; fill: none; stroke: currentColor; }
  </style>
  <header>
    <svg width="18" height="18"><rect x=".5" y=".5" width="17" height="17" fill="#e8edf8" stroke="#9aa5c0"/>
      <path d="M1 6h16M1 11h16M6 1v16M11 1v16" stroke="#c4cde0"/><path d="M1 8q4-7 8-2t8-4" fill="none" stroke="#37b24a" stroke-width="2"/>
      <path d="M2 15q4 0 6-5t9-2" fill="none" stroke="#3f78bb" stroke-width="2"/></svg>
    <h1></h1>
    <button class="link" type="button">L</button>
    <button class="ctl" type="button" aria-label="Minimize"><svg width="12" height="12"><path d="M0 5.500h12"/></svg></button>
    <button class="ctl" type="button" aria-label="Maximize"><svg width="12" height="12"><path d="M.5.5h11v11H.5z"/></svg></button>
    <button class="ctl" type="button" aria-label="Close"><svg width="12" height="12"><path d="M0 0l12 12M12 0L0 12"/></svg></button>
  </header>
  <slot name="tools"></slot>
  <slot></slot>
`;

class ChartWindow extends HTMLElement {
  constructor() {
    super();
    this.attachShadow({ mode: 'open' });
    this.shadowRoot.appendChild(chartWindowTemplate.content.cloneNode(true));
  }

  connectedCallback() {
    this.shadowRoot.querySelector('h1').textContent = this.getAttribute('heading') || '';
  }
}

customElements.define('chart-window', ChartWindow);

const scrollStripTemplate = document.createElement('template');
scrollStripTemplate.innerHTML = `
  <style>
    :host {
      display: flex;
      box-sizing: border-box;
      height: 30px;
      background: #f0f0f0;
      border-bottom: 1px solid #b0b0b0;
    }
    button { flex: none; width: 19px; border: 0; padding: 0; background: none; }
    svg { display: block; margin: auto; }
    .track { flex: 1; display: flex; justify-content: flex-end; padding: 1px 0; }
    .thumb { width: var(--thumb); background: #cdcdcd; }
  </style>
  <button type="button" aria-label="Scroll left"><svg width="8" height="10"><path d="M6 1L2 5l4 4" fill="none" stroke="#505050" stroke-width="2"/></svg></button>
  <div class="track"><div class="thumb"></div></div>
  <button type="button" aria-label="Scroll right"><svg width="8" height="10"><path d="M1 1l4 4-4 4" fill="none" stroke="#505050" stroke-width="2"/></svg></button>
`;

class ScrollStrip extends HTMLElement {
  constructor() {
    super();
    this.attachShadow({ mode: 'open' });
    this.shadowRoot.appendChild(scrollStripTemplate.content.cloneNode(true));
  }
}

customElements.define('scroll-strip', ScrollStrip);

const tradeDeskTemplate = document.createElement('template');
tradeDeskTemplate.innerHTML = `
  <style>
    :host {
      display: grid;
      grid-template-columns: 1134fr 773fr;
      column-gap: 3px;
      position: relative;
      background: #fff;
    }
    /* windows further down show through the gap between the two columns */
    .col { min-width: 0; }
    .left {
      background: linear-gradient(#fff 0 861px, #1565b5 861px 897px, #444 897px 937px, #fff 937px 970px, #1565b5 970px 1006px, #fff 1006px);
    }
    .right { box-shadow: -3px 0 #bbb; }
    .under { grid-column: 1 / -1; height: 3px; box-sizing: border-box; border-bottom: 1px solid #000; background: #fff; display: flex; }
    .under span { height: 2px; }
    .under .gray { margin-left: 40px; width: 37px; background: #aaa; }
    .under .red { margin-left: 10px; width: 114px; background: repeating-linear-gradient(90deg, #b01818 0 9px, #fff 9px 12px); }
    .under .ink { margin-left: 236px; width: 140px; background: repeating-linear-gradient(90deg, #222 0 4px, #fff 4px 9px); }
    .dock { position: absolute; right: 0; top: 904px; }
  </style>
  <div class="col left"><slot name="left"></slot></div>
  <div class="col right"><slot name="right"></slot></div>
  <div class="under"><span class="gray"></span><span class="red"></span><span class="ink"></span></div>
  <svg class="dock" width="23" height="62">
    <path d="M23 0H6Q0 0 0 6v38q0 5 4 7l19 10z" fill="#fff"/>
    <rect x="5" y="7" width="18" height="25" fill="#0e8ee9"/><circle cx="17" cy="19" r="11" fill="#fff"/>
    <path d="M8 19l6-5v3h9v4h-9v3z" fill="#0e8ee9"/>
  </svg>
`;

class TradeDesk extends HTMLElement {
  constructor() {
    super();
    this.attachShadow({ mode: 'open' });
    this.shadowRoot.appendChild(tradeDeskTemplate.content.cloneNode(true));
  }
}

customElements.define('trade-desk', TradeDesk);
</script>
</body>
</html>
